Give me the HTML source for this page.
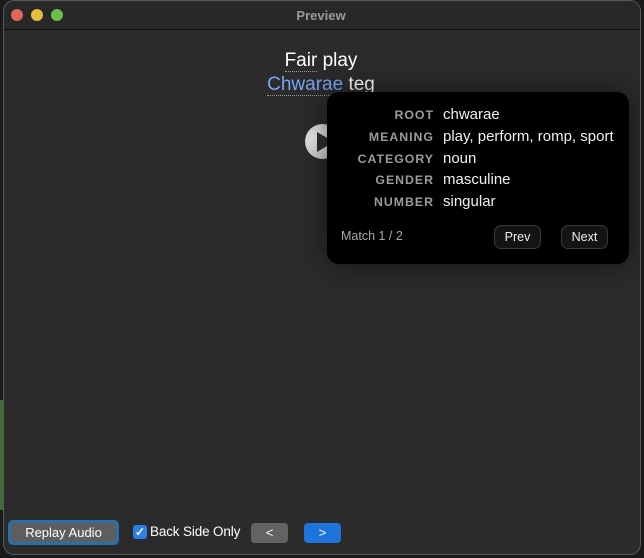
<!DOCTYPE html>
<html><head><meta charset="utf-8"><style>
*{margin:0;padding:0;box-sizing:border-box}
html,body{width:644px;height:558px;overflow:hidden;background:#1a1a1a;font-family:"Liberation Sans",sans-serif}
.strip{position:absolute;left:0;top:400px;width:4px;height:110px;background:#3f6b35}
.win{position:absolute;left:3px;top:0;width:638px;height:555px;background:#2b2b2b;border:1px solid #5a5a5a;border-radius:11px;overflow:hidden}
.tb{position:absolute;left:0;top:0;right:0;height:29px;background:#282828;border-bottom:1px solid #0c0c0c}
.tb .t{position:absolute;left:0;right:0;top:7px;text-align:center;color:#9a9a9a;font-weight:bold;font-size:13px;padding-right:2px}
.dot{position:absolute;top:8px;width:12px;height:12px;border-radius:50%}
.c1{position:absolute;left:0;right:0;text-align:center;font-size:19px}
.dl{border-bottom:1px dotted #9a9a9a}
.play{position:absolute;left:301px;top:123px;width:35px;height:35px;border-radius:50%;background:radial-gradient(circle at 35% 40%,#f0f0f0,#c8c8c8 70%,#a0a0a0)}
.play:after{content:"";position:absolute;left:12px;top:8px;border-left:17px solid #2e2e2e;border-top:10px solid transparent;border-bottom:10px solid transparent}
.pop{position:absolute;left:323px;top:91px;width:302px;height:172px;background:#000;border-radius:12px;box-shadow:0 0 30px rgba(0,0,0,.5)}
.row{position:absolute;left:0;width:100%;height:20px}
.row .k{position:absolute;right:195px;top:3px;font-size:12.3px;font-weight:bold;color:#9c9c9c;letter-spacing:1px}
.row .v{position:absolute;left:116px;top:1px;font-size:15px;color:#f0f0f0}
.match{position:absolute;left:14px;top:137px;font-size:12.5px;color:#a8a8a8}
.pb{position:absolute;top:133px;height:24px;border-radius:7px;background:#141414;border:1px solid #3a3a3a;color:#eee;font-size:12.5px;text-align:center;line-height:22px}
.btm{position:absolute;top:520px;height:23px}
</style></head><body>
<div class="strip"></div>
<div class="win">
 <div class="tb"><div class="t">Preview</div>
  <div class="dot" style="left:7px;background:#e0685a"></div>
  <div class="dot" style="left:27px;background:#e7bd3f"></div>
  <div class="dot" style="left:47px;background:#6cc04a"></div>
 </div>
 <div class="c1" style="top:49px;color:#fff;left:-2px"><span class="dl">Fair</span> play</div>
 <div class="c1" style="top:73px;color:#fff;left:-2px"><span class="dl" style="color:#7aa5f5">Chwarae</span> teg</div>
 <div class="play"></div>
 <div class="pop">
  <div class="row" style="top:13px"><span class="k">ROOT</span><span class="v">chwarae</span></div>
  <div class="row" style="top:35px"><span class="k">MEANING</span><span class="v">play, perform, romp, sport</span></div>
  <div class="row" style="top:57px"><span class="k">CATEGORY</span><span class="v">noun</span></div>
  <div class="row" style="top:78px"><span class="k">GENDER</span><span class="v">masculine</span></div>
  <div class="row" style="top:100px"><span class="k">NUMBER</span><span class="v">singular</span></div>
  <div class="match">Match 1 / 2</div>
  <div class="pb" style="left:167px;width:47px">Prev</div>
  <div class="pb" style="left:234px;width:47px">Next</div>
 </div>
 <div class="btm" style="left:4px;top:519px;height:25px;width:111px;border-radius:5px;background:#5e5e5e;border:3px solid #2a6fa8;color:#fff;font-size:13px;text-align:center;line-height:19px">Replay Audio</div>
 <div class="btm" style="left:129px;top:524px;width:14px;height:14px;border-radius:3px;background:#2d7fe8;color:#fff;font-size:12px;line-height:14px;text-align:center;font-weight:bold">✓</div>
 <div class="btm" style="left:146px;top:523px;color:#fff;font-size:13.5px;letter-spacing:-0.15px">Back Side Only</div>
 <div class="btm" style="left:247px;top:522px;width:37px;height:20px;border-radius:4px;background:#636363;color:#fff;font-size:13px;text-align:center;line-height:19px">&lt;</div>
 <div class="btm" style="left:300px;top:522px;width:37px;height:20px;border-radius:4px;background:#1f74dc;color:#fff;font-size:13px;text-align:center;line-height:19px">&gt;</div>
</div>
</body></html>
